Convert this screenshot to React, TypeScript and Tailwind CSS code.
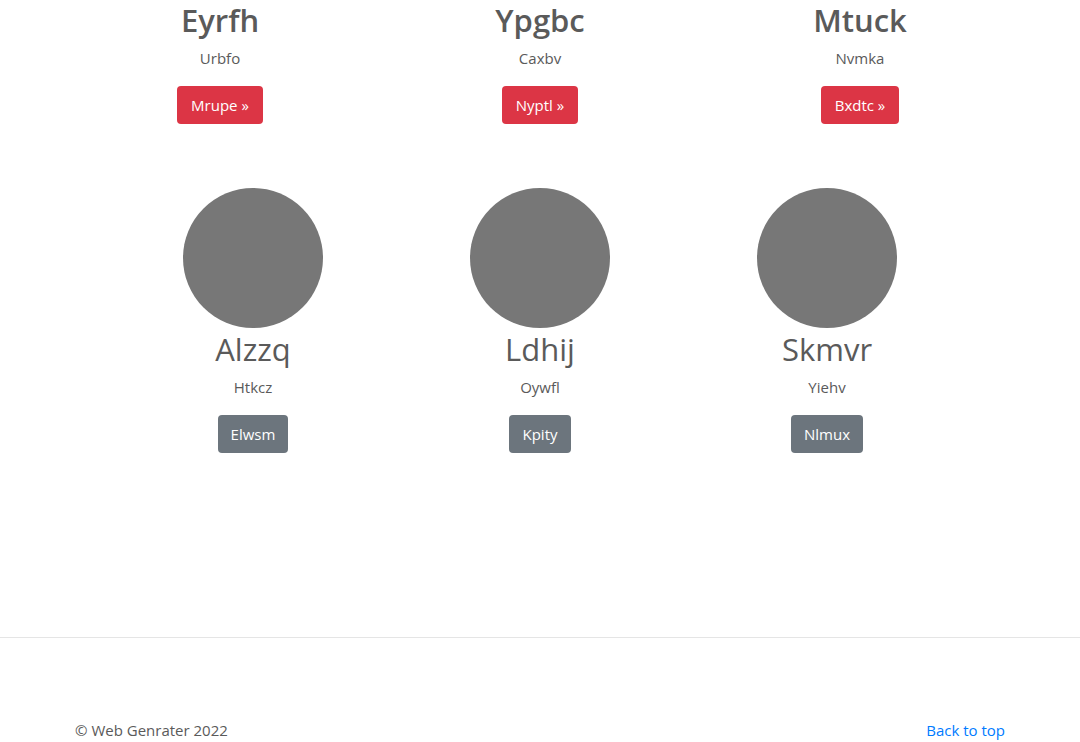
const features = [
  { title: "Eyrfh", text: "Urbfo", action: "Mrupe »", width: "w-[86px]" },
  { title: "Ypgbc", text: "Caxbv", action: "Nyptl »", width: "w-[76px]" },
  { title: "Mtuck", text: "Nvmka", action: "Bxdtc »", width: "w-[78px]" },
];

const people = [
  { title: "Alzzq", text: "Htkcz", action: "Elwsm", width: "w-[70px]" },
  { title: "Ldhij", text: "Oywfl", action: "Kpity", width: "w-[62px]" },
  { title: "Skmvr", text: "Yiehv", action: "Nlmux", width: "w-[72px]" },
];

export default function App() {
  return (
    <div className="overflow-hidden bg-white font-['Open_Sans',sans-serif] text-[15px] leading-6 text-[#5a5a5a]">
      <main>
        <section className="mx-auto grid max-w-[960px] grid-cols-3 text-center">
          {features.map((item) => (
            <article key={item.title} className="flex flex-col items-center">
              <h2 className="text-[31px] leading-10 font-semibold">{item.title}</h2>
              <p className="mt-1.5 mb-4">{item.text}</p>
              <button type="button" className={`h-[38px] rounded bg-[#dc3545] font-medium whitespace-nowrap text-white ${item.width}`}>
                {item.action}
              </button>
            </article>
          ))}
        </section>
        <section className="mx-auto mt-16 grid max-w-[861px] grid-cols-3 text-center">
          {people.map((item) => (
            <article key={item.title} className="flex flex-col items-center">
              <div className="size-[140px] rounded-full bg-[#777]" />
              <h2 className="mt-px text-[31px] leading-10 font-normal">{item.title}</h2>
              <p className="mt-1.5 mb-4">{item.text}</p>
              <button type="button" className={`h-[38px] rounded bg-[#6c757d] font-medium whitespace-nowrap text-white ${item.width}`}>
                {item.action}
              </button>
            </article>
          ))}
        </section>
        <hr className="mt-[184px] border-[#e5e5e5]" />
      </main>
      <footer className="mx-auto mt-20 flex max-w-[930px] justify-between">
        <p>© Web Genrater 2022</p>
        <a href="#" className="text-[#007bff]">Back to top</a>
      </footer>
    </div>
  );
}
